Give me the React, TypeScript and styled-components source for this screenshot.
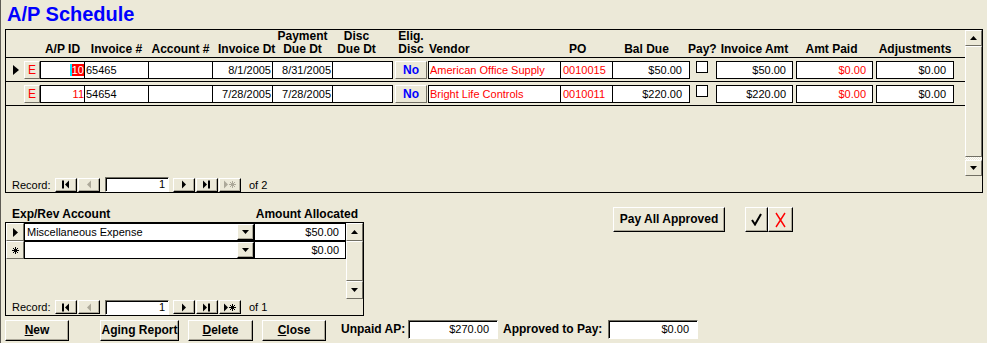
import React from "react";
import styled, { createGlobalStyle, css } from "styled-components";

const GlobalStyle = createGlobalStyle`
  html, body { margin: 0; padding: 0; background: #ece9d8; }
  body { font-family: "Liberation Sans", Arial, sans-serif; font-size: 11px; color: #000; }
  * { box-sizing: border-box; }
`;

const raised = css`
  background: #ece9d8;
  border: 1px solid;
  border-color: #fff #716f64 #716f64 #fff;
`;

const raisedDeep = css`
  background: #ece9d8;
  border: 1px solid;
  border-color: #fff #000 #000 #fff;
  box-shadow: inset -1px -1px 0 #aca899;
`;

const sunken = css`
  background: #fff;
  border: 1px solid;
  border-color: #716f64 #fff #fff #716f64;
  box-shadow: inset 1px 1px 0 #000;
`;

const Page = styled.div`
  width: 987px;
  height: 343px;
  overflow: hidden;
  border-left: 1px solid #5e5c55;
  display: flex;
  flex-direction: column;
`;

const Title = styled.h1`
  margin: 0;
  height: 29px;
  flex-shrink: 0;
  padding-left: 6px;
  font: bold 20px/29px "Liberation Sans", Arial, sans-serif;
  color: #0000ff;
`;

const MainSub = styled.div`
  margin-left: 4px;
  width: 978px;
  height: 164px;
  flex-shrink: 0;
  border: 1px solid #000;
  display: flex;
  flex-direction: column;
`;

const SubTop = styled.div<{ $h: number }>`
  display: flex;
  height: ${(p) => p.$h}px;
  flex-shrink: 0;
`;

const Sheet = styled.div`
  flex: 1;
  min-width: 0;
`;

const HeaderRow = styled.div`
  display: flex;
  align-items: flex-end;
  height: 28px;
  padding-bottom: 1px;
  border-bottom: 1px solid #000;
`;

const HeadCell = styled.div<{
  $w: number;
  $ml?: number;
  $align?: string;
  $pl?: number;
  $pr?: number;
}>`
  flex-shrink: 0;
  width: ${(p) => p.$w}px;
  margin-left: ${(p) => p.$ml ?? 0}px;
  padding: 0 ${(p) => p.$pr ?? 0}px 0 ${(p) => p.$pl ?? 0}px;
  text-align: ${(p) => p.$align ?? "center"};
  font-weight: bold;
  font-size: 12px;
  line-height: 13px;
  white-space: nowrap;
`;

const DataRow = styled.div`
  display: flex;
  align-items: flex-start;
  height: 24px;
  padding-top: 3px;
  border-bottom: 1px solid #000;
`;

const Selector = styled.div`
  width: 18px;
  height: 18px;
  flex-shrink: 0;
  display: flex;
  align-items: center;
  padding-left: 7px;
`;

const EditBtn = styled.div`
  ${raised};
  width: 16px;
  height: 18px;
  flex-shrink: 0;
  color: #ff0000;
  font-size: 12px;
  line-height: 16px;
  text-align: center;
`;

const Field = styled.div<{
  $w: number;
  $ml?: number;
  $right?: boolean;
  $red?: boolean;
  $pr?: number;
  $pl?: number;
}>`
  flex-shrink: 0;
  width: ${(p) => p.$w}px;
  height: 18px;
  margin-left: ${(p) => p.$ml ?? 0}px;
  border: 1px solid #000;
  background: #fff;
  color: ${(p) => (p.$red ? "#ff0000" : "#000")};
  text-align: ${(p) => (p.$right ? "right" : "left")};
  padding: 0 ${(p) => p.$pr ?? 1}px 0 ${(p) => p.$pl ?? 1}px;
  font-size: 11px;
  line-height: 16px;
  white-space: nowrap;
  overflow: hidden;
`;

const Picked = styled.span`
  background: #ff0000;
  color: #ffffff;
  border-left: 2px solid #00e5ff;
`;

const NoBtn = styled.div`
  ${raised};
  width: 32px;
  height: 18px;
  margin-left: 2px;
  flex-shrink: 0;
  color: #0000ff;
  font-weight: bold;
  font-size: 12px;
  line-height: 16px;
  text-align: center;
`;

const Check = styled.div`
  width: 12px;
  height: 12px;
  margin-left: 6px;
  flex-shrink: 0;
  border: 1px solid #000;
  background: #fff;
`;

const ScrollBar = styled.div<{ $h: number }>`
  width: 17px;
  height: ${(p) => p.$h}px;
  flex-shrink: 0;
  display: flex;
  flex-direction: column;
`;

const ScrollBtn = styled.div<{ $h: number }>`
  ${raised};
  height: ${(p) => p.$h}px;
  flex-shrink: 0;
  display: flex;
  align-items: center;
  justify-content: center;
`;

const ScrollThumb = styled.div`
  ${raised};
  flex: 1;
`;

const ScrollTrack = styled.div`
  height: 3px;
  flex-shrink: 0;
  background: repeating-conic-gradient(#fff 0 25%, #ece9d8 0 50%) 0 0 / 2px 2px;
`;

const Nav = styled.div<{ $h: number }>`
  display: flex;
  align-items: center;
  height: ${(p) => p.$h}px;
  flex-shrink: 0;
  padding-left: 6px;
  font-size: 11px;
`;

const NavLabel = styled.span`
  width: 43px;
  flex-shrink: 0;
`;

const NavBtn = styled.div<{ $ml?: number }>`
  ${raisedDeep};
  width: 22px;
  height: 14px;
  margin-left: ${(p) => p.$ml ?? 1}px;
  display: flex;
  align-items: center;
  justify-content: center;
`;

const NavInput = styled.div`
  ${sunken};
  width: 64px;
  height: 15px;
  margin: 0 4px 0 5px;
  padding-right: 3px;
  text-align: right;
  line-height: 13px;
`;

const NavOf = styled.span`
  margin-left: 8px;
`;

const Middle = styled.div`
  display: flex;
  align-items: flex-start;
  height: 125px;
  flex-shrink: 0;
  padding-top: 14px;
`;

const AllocBlock = styled.div`
  margin-left: 4px;
  width: 359px;
  flex-shrink: 0;
`;

const AllocLabels = styled.div`
  display: flex;
  justify-content: space-between;
  height: 15px;
  padding: 0 6px 0 7px;
  font-weight: bold;
  font-size: 12px;
  line-height: 15px;
`;

const AllocBox = styled.div`
  height: 94px;
  border: 1px solid #000;
  display: flex;
  flex-direction: column;
`;

const AllocRow = styled.div`
  display: flex;
  height: 18px;
`;

const RowHead = styled.div`
  ${raised};
  width: 18px;
  height: 18px;
  flex-shrink: 0;
  display: flex;
  align-items: center;
  justify-content: center;
`;

const Combo = styled.div`
  width: 231px;
  height: 18px;
  flex-shrink: 0;
  border: 1px solid #000;
  background: #fff;
  display: flex;
`;

const ComboText = styled.div`
  flex: 1;
  padding-left: 2px;
  line-height: 16px;
  font-size: 11px;
  white-space: nowrap;
`;

const DropBtn = styled.div`
  ${raisedDeep};
  width: 17px;
  height: 16px;
  display: flex;
  align-items: center;
  justify-content: center;
`;

const Actions = styled.div`
  display: flex;
  margin-left: 249px;
`;

const PayBtn = styled.div`
  ${raisedDeep};
  width: 112px;
  height: 25px;
  font-weight: bold;
  font-size: 12px;
  line-height: 23px;
  text-align: center;
`;

const IconBtn = styled.div<{ $w: number; $ml?: number }>`
  ${raisedDeep};
  width: ${(p) => p.$w}px;
  height: 25px;
  margin-left: ${(p) => p.$ml ?? 0}px;
  display: flex;
  align-items: center;
  justify-content: center;
`;

const BottomBar = styled.div`
  display: flex;
  align-items: flex-start;
  height: 25px;
  flex-shrink: 0;
  padding-top: 2px;
`;

const CmdBtn = styled.div<{ $w: number; $ml: number }>`
  ${raisedDeep};
  width: ${(p) => p.$w}px;
  height: 21px;
  margin-left: ${(p) => p.$ml}px;
  flex-shrink: 0;
  font-weight: bold;
  font-size: 12px;
  line-height: 19px;
  text-align: center;
`;

const TotalLabel = styled.div<{ $w: number; $ml: number }>`
  width: ${(p) => p.$w}px;
  margin-left: ${(p) => p.$ml}px;
  flex-shrink: 0;
  font-weight: bold;
  font-size: 12px;
  line-height: 19px;
  white-space: nowrap;
`;

const TotalField = styled.div`
  ${sunken};
  width: 90px;
  height: 19px;
  flex-shrink: 0;
  padding-right: 8px;
  text-align: right;
  line-height: 17px;
  font-size: 11px;
`;

const Arrow = ({ dir, color = "#000" }: { dir: "up" | "down"; color?: string }) => (
  <svg width="7" height="4" viewBox="0 0 7 4">
    <polygon points={dir === "up" ? "0,4 7,4 3.5,0" : "0,0 7,0 3.5,4"} fill={color} />
  </svg>
);

const Star = ({ x, color }: { x: number; color: string }) => (
  <g stroke={color} strokeWidth="1">
    <line x1={x} y1="1" x2={x} y2="8" />
    <line x1={x - 3.5} y1="4.5" x2={x + 3.5} y2="4.5" />
    <line x1={x - 2.5} y1="2" x2={x + 2.5} y2="7" />
    <line x1={x - 2.5} y1="7" x2={x + 2.5} y2="2" />
  </g>
);

type NavKind = "first" | "prev" | "next" | "last" | "new";

const NavIcon = ({ kind, off }: { kind: NavKind; off?: boolean }) => {
  const c = off ? "#aca899" : "#000";
  return (
    <svg width="14" height="9" viewBox="0 0 14 9">
      {kind === "first" && (
        <>
          <rect x="3" y="0.5" width="2" height="8" fill={c} />
          <polygon points="10,0.5 10,8.5 6,4.5" fill={c} />
        </>
      )}
      {kind === "prev" && <polygon points="9,0.5 9,8.5 5,4.5" fill={c} />}
      {kind === "next" && <polygon points="5,0.5 5,8.5 9,4.5" fill={c} />}
      {kind === "last" && (
        <>
          <polygon points="3,0.5 3,8.5 7,4.5" fill={c} />
          <rect x="8" y="0.5" width="2" height="8" fill={c} />
        </>
      )}
      {kind === "new" && (
        <>
          <polygon points="1,0.5 1,8.5 5,4.5" fill={c} />
          <Star x={9.5} color={c} />
        </>
      )}
    </svg>
  );
};

const RecordNav = ({ of, newOff, h }: { of: number; newOff?: boolean; h: number }) => (
  <Nav $h={h}>
    <NavLabel>Record:</NavLabel>
    <NavBtn $ml={0}>
      <NavIcon kind="first" />
    </NavBtn>
    <NavBtn>
      <NavIcon kind="prev" off />
    </NavBtn>
    <NavInput>1</NavInput>
    <NavBtn $ml={0}>
      <NavIcon kind="next" />
    </NavBtn>
    <NavBtn>
      <NavIcon kind="last" />
    </NavBtn>
    <NavBtn>
      <NavIcon kind="new" off={newOff} />
    </NavBtn>
    <NavOf>of {of}</NavOf>
  </Nav>
);

const Scroll = ({ h, btn, track }: { h: number; btn: number; track?: boolean }) => (
  <ScrollBar $h={h}>
    <ScrollBtn $h={btn}>
      <Arrow dir="up" />
    </ScrollBtn>
    <ScrollThumb />
    {track && <ScrollTrack />}
    <ScrollBtn $h={btn}>
      <Arrow dir="down" />
    </ScrollBtn>
  </ScrollBar>
);

type Invoice = {
  id: string;
  inv: string;
  invDt: string;
  payDue: string;
  vendor: string;
  po: string;
  bal: string;
  invAmt: string;
  paid: string;
  adj: string;
  current?: boolean;
};

const invoices: Invoice[] = [
  {
    id: "10",
    inv: "65465",
    invDt: "8/1/2005",
    payDue: "8/31/2005",
    vendor: "American Office Supply",
    po: "0010015",
    bal: "$50.00",
    invAmt: "$50.00",
    paid: "$0.00",
    adj: "$0.00",
    current: true,
  },
  {
    id: "11",
    inv: "54654",
    invDt: "7/28/2005",
    payDue: "7/28/2005",
    vendor: "Bright Life Controls",
    po: "0010011",
    bal: "$220.00",
    invAmt: "$220.00",
    paid: "$0.00",
    adj: "$0.00",
  },
];

export default function App() {
  return (
    <>
      <GlobalStyle />
      <Page>
        <Title>A/P Schedule</Title>

        <MainSub>
          <SubTop $h={147}>
            <Sheet>
              <HeaderRow>
                <HeadCell $w={34} />
                <HeadCell $w={45}>A/P ID</HeadCell>
                <HeadCell $w={65} $ml={-1}>Invoice #</HeadCell>
                <HeadCell $w={65} $ml={-1}>Account #</HeadCell>
                <HeadCell $w={61} $ml={-1} $pl={6}>Invoice Dt</HeadCell>
                <HeadCell $w={61} $ml={-1}>
                  Payment
                  <br />
                  Due Dt
                </HeadCell>
                <HeadCell $w={61} $ml={-1} $pr={12}>
                  Disc
                  <br />
                  Due Dt
                </HeadCell>
                <HeadCell $w={32} $ml={2}>
                  Elig.
                  <br />
                  Disc
                </HeadCell>
                <HeadCell $w={133} $ml={1} $align="left" $pl={1}>Vendor</HeadCell>
                <HeadCell $w={53} $ml={-1} $align="left" $pl={9}>PO</HeadCell>
                <HeadCell $w={78} $ml={-1} $pr={9}>Bal Due</HeadCell>
                <HeadCell $w={26} $ml={-2}>Pay?</HeadCell>
                <HeadCell $w={77} $ml={2}>Invoice Amt</HeadCell>
                <HeadCell $w={77} $ml={3} $pr={6}>Amt Paid</HeadCell>
                <HeadCell $w={78} $ml={3}>Adjustments</HeadCell>
              </HeaderRow>

              {invoices.map((r) => (
                <DataRow key={r.id}>
                  <Selector>
                    {r.current && (
                      <svg width="6" height="10" viewBox="0 0 6 10">
                        <polygon points="0,0 0,10 6,5" fill="#000" />
                      </svg>
                    )}
                  </Selector>
                  <EditBtn>E</EditBtn>
                  <Field $w={45} $right $red $pr={0}>
                    {r.current ? <Picked>{r.id}</Picked> : r.id}
                  </Field>
                  <Field $w={65} $ml={-1}>{r.inv}</Field>
                  <Field $w={65} $ml={-1} />
                  <Field $w={61} $ml={-1} $right>{r.invDt}</Field>
                  <Field $w={61} $ml={-1} $right>{r.payDue}</Field>
                  <Field $w={61} $ml={-1} />
                  <NoBtn>No</NoBtn>
                  <Field $w={133} $ml={1} $red>{r.vendor}</Field>
                  <Field $w={53} $ml={-1} $red $pl={2}>{r.po}</Field>
                  <Field $w={78} $ml={-1} $right $pr={7}>{r.bal}</Field>
                  <Check />
                  <Field $w={77} $ml={8} $right $pr={6}>{r.invAmt}</Field>
                  <Field $w={77} $ml={3} $right $red $pr={6}>{r.paid}</Field>
                  <Field $w={78} $ml={3} $right $pr={7}>{r.adj}</Field>
                </DataRow>
              ))}
            </Sheet>
            <Scroll h={146} btn={16} track />
          </SubTop>
          <RecordNav of={2} newOff h={15} />
        </MainSub>

        <Middle>
          <AllocBlock>
            <AllocLabels>
              <span>Exp/Rev Account</span>
              <span>Amount Allocated</span>
            </AllocLabels>
            <AllocBox>
              <SubTop $h={76}>
                <Sheet>
                  <AllocRow>
                    <RowHead>
                      <svg width="5" height="9" viewBox="0 0 5 9">
                        <polygon points="0,0 0,9 5,4.5" fill="#000" />
                      </svg>
                    </RowHead>
                    <Combo>
                      <ComboText>Miscellaneous Expense</ComboText>
                      <DropBtn>
                        <Arrow dir="down" />
                      </DropBtn>
                    </Combo>
                    <Field $w={92} $ml={-1} $right $pr={6}>$50.00</Field>
                  </AllocRow>
                  <AllocRow>
                    <RowHead>
                      <svg width="9" height="9" viewBox="0 0 9 9">
                        <Star x={4.5} color="#000" />
                      </svg>
                    </RowHead>
                    <Combo>
                      <ComboText />
                      <DropBtn>
                        <Arrow dir="down" />
                      </DropBtn>
                    </Combo>
                    <Field $w={92} $ml={-1} $right $pr={6}>$0.00</Field>
                  </AllocRow>
                </Sheet>
                <Scroll h={76} btn={18} />
              </SubTop>
              <RecordNav of={1} h={16} />
            </AllocBox>
          </AllocBlock>

          <Actions>
            <PayBtn>Pay All Approved</PayBtn>
            <IconBtn $w={23} $ml={20}>
              <svg width="11" height="13" viewBox="0 0 11 13">
                <path d="M1 7 L4 11.5 L10 1" fill="none" stroke="#000" strokeWidth="2" />
              </svg>
            </IconBtn>
            <IconBtn $w={25}>
              <svg width="11" height="16" viewBox="0 0 11 16">
                <path d="M1 1 L10 15 M10 1 L1 15" fill="none" stroke="#ff0000" strokeWidth="1.4" />
              </svg>
            </IconBtn>
          </Actions>
        </Middle>

        <BottomBar>
          <CmdBtn $w={64} $ml={4}>
            <u>N</u>ew
          </CmdBtn>
          <CmdBtn $w={79} $ml={31}>Aging Report</CmdBtn>
          <CmdBtn $w={65} $ml={9}>
            <u>D</u>elete
          </CmdBtn>
          <CmdBtn $w={64} $ml={9}>
            <u>C</u>lose
          </CmdBtn>
          <TotalLabel $w={67} $ml={15}>Unpaid AP:</TotalLabel>
          <TotalField>$270.00</TotalField>
          <TotalLabel $w={105} $ml={5}>Approved to Pay:</TotalLabel>
          <TotalField>$0.00</TotalField>
        </BottomBar>
      </Page>
    </>
  );
}
